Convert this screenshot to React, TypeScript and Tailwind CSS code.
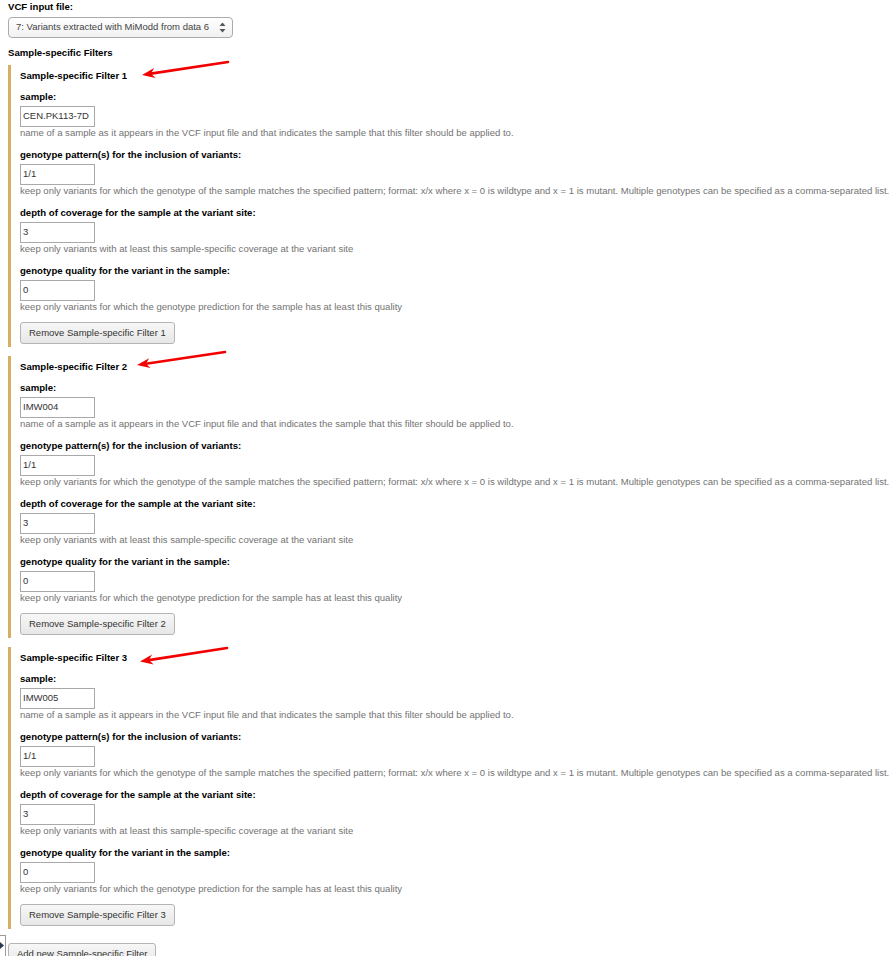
import React from "react";

const font = { fontFamily: '"Liberation Sans", Arial, sans-serif' };

function Arrow({ tail, tip }: { tail: [number, number]; tip: [number, number] }) {
  const dx = tail[0] - tip[0];
  const dy = tail[1] - tip[1];
  const len = Math.sqrt(dx * dx + dy * dy);
  const ux = dx / len;
  const uy = dy / len;
  const px = -uy;
  const py = ux;
  const back = 13;
  const half = 5;
  const b1: [number, number] = [tip[0] + ux * back + px * half, tip[1] + uy * back + py * half];
  const b2: [number, number] = [tip[0] + ux * back - px * half, tip[1] + uy * back - py * half];
  const notch: [number, number] = [tip[0] + ux * 9, tip[1] + uy * 9];
  return (
    <svg className="absolute left-[-11px] top-[-12px] pointer-events-none" width="240" height="40" viewBox="0 -12 240 40">
      <line x1={tail[0]} y1={tail[1]} x2={notch[0]} y2={notch[1]} stroke="#f20000" strokeWidth="2.6" strokeLinecap="round" />
      <polygon
        points={`${tip[0]},${tip[1]} ${b1[0]},${b1[1]} ${notch[0]},${notch[1]} ${b2[0]},${b2[1]}`}
        fill="#f20000"
      />
    </svg>
  );
}

function Label({ children }: { children: React.ReactNode }) {
  return <div className="h-[14px] text-[9.6px] leading-[14px] font-bold text-black whitespace-nowrap">{children}</div>;
}

function Help({ children }: { children: React.ReactNode }) {
  return <div className="h-[12px] text-[9.55px] leading-[12px] text-[#737373] whitespace-nowrap">{children}</div>;
}

function TextInput({ value }: { value: string }) {
  return (
    <div className="mt-[2px] w-[75px] h-[21px] border border-[#a9a9a9] bg-white pl-[2px] flex items-center text-[9.5px] text-[#333] whitespace-nowrap overflow-hidden">
      {value}
    </div>
  );
}

function Field({ label, value, help, first }: { label: string; value: string; help: string; first?: boolean }) {
  return (
    <div className={first ? "mt-[7px]" : "mt-[9px]"}>
      <Label>{label}</Label>
      <TextInput value={value} />
      <Help>{help}</Help>
    </div>
  );
}

function Button({ children }: { children: React.ReactNode }) {
  return (
    <div className="flex items-center h-[22px] px-[8px] border border-[#b4b4b4] rounded-[3px] bg-linear-to-b from-[#f7f7f7] to-[#e7e7e7] text-[9.5px] text-[#333] whitespace-nowrap">
      {children}
    </div>
  );
}

function FilterBlock({ n, sample, arrow }: { n: number; sample: string; arrow: { tail: [number, number]; tip: [number, number] } }) {
  return (
    <div className="relative border-l-[3px] border-[#d6b062] pl-[9px] pt-[4px] pb-[4px] h-[282px]">
      <Label>Sample-specific Filter {n}</Label>
      <Field
        first
        label="sample:"
        value={sample}
        help="name of a sample as it appears in the VCF input file and that indicates the sample that this filter should be applied to."
      />
      <Field
        label="genotype pattern(s) for the inclusion of variants:"
        value="1/1"
        help="keep only variants for which the genotype of the sample matches the specified pattern; format: x/x where x = 0 is wildtype and x = 1 is mutant. Multiple genotypes can be specified as a comma-separated list."
      />
      <Field
        label="depth of coverage for the sample at the variant site:"
        value="3"
        help="keep only variants with at least this sample-specific coverage at the variant site"
      />
      <Field
        label="genotype quality for the variant in the sample:"
        value="0"
        help="keep only variants for which the genotype prediction for the sample has at least this quality"
      />
      <div className="mt-[9px] flex">
        <Button>Remove Sample-specific Filter {n}</Button>
      </div>
      <Arrow tail={arrow.tail} tip={arrow.tip} />
    </div>
  );
}

export default function App() {
  return (
    <div className="relative w-[895px] h-[956px] overflow-hidden bg-white" style={font}>
      <div className="pl-[8px]">
        <Label>VCF input file:</Label>
        <div className="mt-[3px] w-[225px] h-[21px] border border-[#ababab] rounded-[4px] bg-linear-to-b from-white to-[#f1f1f1] flex items-center pl-[7px] pr-[6px] text-[9.5px] text-[#444] whitespace-nowrap">
          <span className="flex-1">7: Variants extracted with MiModd from data 6</span>
          <svg width="7" height="13" viewBox="0 0 7 13">
            <polygon points="3.5,1.5 6.5,5 0.5,5" fill="#555" />
            <polygon points="0.5,8 6.5,8 3.5,11.5" fill="#555" />
          </svg>
        </div>
        <div className="mt-[8px]">
          <Label>Sample-specific Filters</Label>
        </div>
        <div className="mt-[5px] flex flex-col gap-[9px]">
          <FilterBlock n={1} sample="CEN.PK113-7D" arrow={{ tail: [228, -3], tip: [142, 10] }} />
          <FilterBlock n={2} sample="IMW004" arrow={{ tail: [225, -4], tip: [137, 9] }} />
          <FilterBlock n={3} sample="IMW005" arrow={{ tail: [227, 1], tip: [140, 14.5] }} />
        </div>
        <div className="mt-[14px] flex">
          <Button>Add new Sample-specific Filter</Button>
        </div>
      </div>
      <div className="absolute left-0 top-[935px] w-[6px] h-[21px] border-t border-r border-[#9a9a9a] bg-white">
        <svg className="absolute left-0 top-[6px]" width="4" height="7" viewBox="0 0 4 7">
          <polygon points="0,0 4,3.5 0,7" fill="#2a3a55" />
        </svg>
      </div>
    </div>
  );
}
